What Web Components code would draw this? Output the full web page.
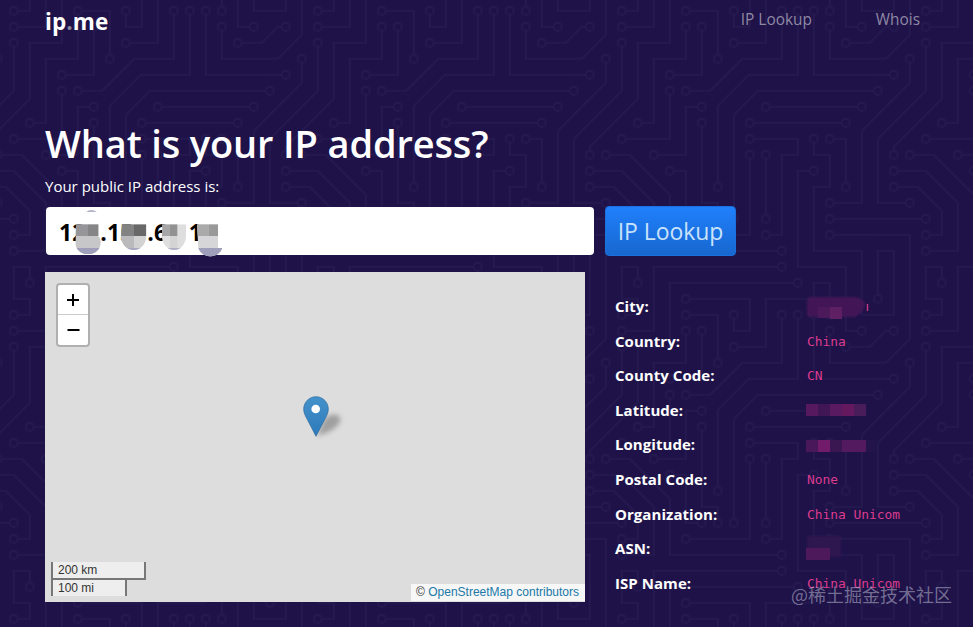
<!DOCTYPE html>
<html lang="en">
<head>
<meta charset="utf-8">
<title>ip.me</title>
<style>
    html, body {
        margin: 0;
        height: 627px;
        overflow: hidden;
        background: #1e1249;
    }
    body {
        font-family: "Open Sans", "Noto Sans", sans-serif;
        color: #fff;
    }
</style>
</head>
<body>
<ip-page>
    <site-header slot="header"></site-header>
    <page-intro slot="intro"></page-intro>
    <lookup-form slot="form"></lookup-form>
    <location-map slot="map"></location-map>
    <detail-list slot="details">
        <detail-row label="City:" mask="city"></detail-row>
        <detail-row label="Country:">China</detail-row>
        <detail-row label="County Code:">CN</detail-row>
        <detail-row label="Latitude:" mask="latitude"></detail-row>
        <detail-row label="Longitude:" mask="longitude"></detail-row>
        <detail-row label="Postal Code:">None</detail-row>
        <detail-row label="Organization:">China Unicom</detail-row>
        <detail-row label="ASN:" mask="asn"></detail-row>
        <detail-row label="ISP Name:">China Unicom</detail-row>
    </detail-list>
    <water-mark slot="mark">@稀土掘金技术社区</water-mark>
</ip-page>

<script>
function define(name, html) {
    const template = document.createElement('template');
    template.innerHTML = html;
    customElements.define(name, class extends HTMLElement {
        constructor() {
            super();
            this.attachShadow({ mode: 'open' }).appendChild(template.content.cloneNode(true));
        }
    });
}

// Circuit traces on a 304px tile. Traces in "both" end in a ring on each side,
// "start" has a ring on the first point only, "plain" has none.
const traces = {
    both: [
        'M273 129H177', 'M193 113H289', 'M193 225V161', 'M129 129V209H145V225',
        'M129 113H113V161H81', 'M113 241H177V161', 'M97 177H113V225H129',
        'M257 145H273V193', 'M193 241H209V161H225V145H177', 'M97 97V145H49',
        'M113 33V65H81V129H65', 'M97 81H129V33', 'M113 17H145V65',
        'M113 1H177V33H161V17', 'M113 97H137.4L169.4 65H209V17',
        'M145 193V112L176 81H225V17', 'M161 225V121L185 97H305',
        'M49 49V97L1 145V209H33', 'M49 241H65V217L41 193H17',
        'M209 257H97V201L57 161H33', 'M49 257H81V209L49 177H17'
    ],
    start: [
        'M49 225H0', 'M209 273H82', 'M257 225H304', 'M257 241H304', 'M17 81H0',
        'M257 17V0', 'M241 17V81H304', 'M257 33V65H304', 'M65 289V273H49V304',
        'M241 177H225V273H273V304', 'M289 33H273V0', 'M49 33H81V0',
        'M225 289H97V304', 'M241 145V161H257V193H241V257H289V304',
        'M49 17H65V1H48', 'M161 49H193V1H242', 'M17 161V153L65 105V49H97V0',
        'M33 65V89L0 122', 'M17 33H9L0 42', 'M273 49H297L304 42',
        'M257 209H289V137L304 122', 'M1 305V257H17V304'
    ],
    plain: [
        'M33 0V41L9 65H0', 'M33 304V241H0', 'M0 17H17V0', 'M289 0V17H304',
        'M257 304V289H241V304', 'M81 272V304'
    ]
};

class CircuitBackground extends HTMLElement {
    constructor() {
        super();
        const paths = Object.keys(traces).map(kind =>
            traces[kind].map(d => `<path class="${kind}" d="${d}"/>`).join('')
        ).join('');
        this.attachShadow({ mode: 'open' }).innerHTML = `
            <style>
                :host { display: block; }
                svg { display: block; width: 100%; height: 100%; }
                path { fill: none; stroke: #261b51; stroke-width: 1.6; }
                circle { fill: #1e1249; stroke: #251a50; stroke-width: 1.8; }
                .both { marker-start: url(#ring); marker-end: url(#ring); }
                .start { marker-start: url(#ring); }
            </style>
            <svg>
                <defs>
                    <marker id="ring" viewBox="-6 -6 12 12" markerWidth="12" markerHeight="12" markerUnits="userSpaceOnUse">
                        <circle r="4"/>
                    </marker>
                    <pattern id="tile" x="-35.2" y="-6.2" width="304" height="304" patternUnits="userSpaceOnUse">
                        ${paths}
                        <circle cx="1" cy="97" r="4"/><circle cx="1" cy="1" r="4"/>
                        <circle cx="305" cy="1" r="4"/><circle cx="305" cy="305" r="4"/>
                        <circle cx="113" cy="305" r="4"/>
                    </pattern>
                </defs>
                <rect width="100%" height="100%" fill="url(#tile)"/>
            </svg>`;
    }
}
customElements.define('circuit-background', CircuitBackground);

define('ip-page', `
    <style>
        :host { display: block; position: relative; height: 627px; overflow: hidden; }
        circuit-background { position: absolute; inset: 0; }
        .page { position: relative; display: flex; flex-direction: column; padding-left: 45px; }
        .columns { display: flex; gap: 30px; margin-top: 17px; }
        ::slotted([slot="mark"]) { position: absolute; left: 791px; top: 581px; }
    </style>
    <circuit-background></circuit-background>
    <div class="page">
        <slot name="header"></slot>
        <slot name="intro"></slot>
        <slot name="form"></slot>
        <div class="columns">
            <slot name="map"></slot>
            <slot name="details"></slot>
        </div>
    </div>
    <slot name="mark"></slot>
`);

define('site-header', `
    <style>
        :host { display: flex; justify-content: space-between; align-items: flex-start; height: 42px; padding-right: 53px; }
        .logo { font-size: 22.5px; font-weight: 700; letter-spacing: 0.1px; line-height: 44px; }
        .logo i { font-style: normal; color: #8c879c; }
        nav { display: flex; gap: 64px; font-size: 15.4px; line-height: 40px; color: #8f88a4; }
    </style>
    <div class="logo">ip<i>.</i>me</div>
    <nav><span>IP Lookup</span><span>Whois</span></nav>
`);

define('page-intro', `
    <style>
        :host { display: block; height: 164px; }
        h1 { margin: 0; padding-top: 77px; font-size: 38px; font-weight: 600; line-height: 48px; letter-spacing: -0.14px; white-space: nowrap; }
        p { margin: 7px 0 0; font-size: 15px; line-height: 24px; }
    </style>
    <h1>What is your IP address?</h1>
    <p>Your public IP address is:</p>
`);

define('lookup-form', `
    <style>
        :host { display: flex; align-items: center; gap: 11px; height: 49px; padding: 0 0 0 1px; }
        .field { position: relative; box-sizing: border-box; width: 548px; height: 48px; border-radius: 4px; background: #fff; }
        /* the redaction blobs hang over the lower edge of the field */
        svg { position: absolute; left: -6px; top: -12px; width: 220px; height: 75px; }
        text { font-size: 69px; font-weight: 700; fill: #000; }
        button {
            box-sizing: border-box; width: 131px; height: 50px; padding: 0;
            border: 1px solid #1a70df; border-radius: 4px;
            background: linear-gradient(#2080fc, #1767cf);
            color: #c9e2fc; font: 23px/48px "Open Sans", sans-serif; letter-spacing: -0.05px;
        }
    </style>
    <div class="field">
        <svg viewBox="0 0 660 225">
            <defs>
                <clipPath id="c1"><path d="M108 88h67v35q8 8 7 20a38 35 0 0 1-76 0z"/></clipPath>
                <clipPath id="c2"><path d="M246 88h73v35a38 42 0 0 1-76 0z"/></clipPath>
                <clipPath id="c3"><path d="M367 88h71v35a36 42 0 0 1-72 0z"/></clipPath>
                <clipPath id="c4"><path d="M471 88h63v71h13a37 33 0 0 1-72 0z"/></clipPath>
            </defs>
            <text x="57" y="138">12</text>
            <text x="181" y="138">.1</text>
            <text x="240" y="138">5</text>
            <text x="322" y="138">.6</text>
            <text x="446" y="138">1</text>
            <path fill="#9b9bbb" d="M139 50q14-8 31 0z"/>
            <g clip-path="url(#c1)">
                <path fill="#c7c7ca" d="M100 80h90v110h-90z"/>
                <path fill="#969699" d="M100 80h44v43h-44z"/><path fill="#858588" d="M144 80h40v43h-40z"/>
                <path fill="#9e9ebb" d="M100 159h90v30h-90z"/>
            </g>
            <g clip-path="url(#c2)">
                <path fill="#d2d2d3" d="M240 80h90v110h-90z"/>
                <path fill="#828283" d="M240 80h42v43h-42z"/><path fill="#686869" d="M282 80h40v43h-40z"/>
                <path fill="#bababc" d="M240 123h42v36h-42z"/>
                <path fill="#a7a7c0" d="M240 159h90v30h-90z"/>
            </g>
            <g clip-path="url(#c3)">
                <path fill="#dededf" d="M360 80h90v110h-90z"/>
                <path fill="#a6a6a8" d="M360 80h30v43h-30z"/><path fill="#929293" d="M390 80h22v43h-22z"/>
                <path fill="#d4d4d5" d="M390 123h22v36h-22z"/>
                <path fill="#aeaec5" d="M360 159h90v30h-90z"/>
            </g>
            <g clip-path="url(#c4)">
                <path fill="#d6d6d8" d="M468 80h84v115h-84z"/>
                <path fill="#aaaaab" d="M468 80h38v43h-38z"/><path fill="#999" d="M506 80h28v43h-28z"/>
                <path fill="#9f9ebb" d="M468 159h84v36h-84z"/>
            </g>
        </svg>
    </div>
    <button>IP Lookup</button>
`);

define('map-pin', `
    <style>
        :host { display: block; width: 45px; height: 45px; }
        svg { display: block; }
    </style>
    <svg width="45" height="45" viewBox="0 0 45 45">
        <defs>
            <linearGradient id="body" x2="0" y2="1"><stop stop-color="#4492cb"/><stop offset="1" stop-color="#2d79bb"/></linearGradient>
            <filter id="soft" x="-30%" y="-30%" width="160%" height="160%"><feGaussianBlur stdDeviation="2.4"/></filter>
        </defs>
        <path d="M14 40 21 23q8-7 15-3 4 5-3 11-7 6-19 9z" fill="#555" opacity=".45" filter="url(#soft)"/>
        <path d="M13 .7C6.200.7.7 6.200.7 13c0 3 1 5.500 2.300 8L13 40.300 23 21c1.300-2.500 2.300-5 2.300-8C25.300 6.200 19.800.7 13 .7z" fill="url(#body)" stroke="#2f6c9e" stroke-width=".7"/>
        <circle cx="12.700" cy="13" r="4.300" fill="#fff"/>
    </svg>
`);

define('location-map', `
    <style>
        :host { display: block; position: relative; width: 540px; height: 330px; background: #ddd; font-family: "Liberation Sans", Arial, sans-serif; }
        .zoom { position: absolute; left: 11px; top: 11px; box-sizing: border-box; width: 34px; height: 64px; border: 2px solid #b0b0b0; border-radius: 4px; background: #fff; }
        .zoom div { box-sizing: border-box; height: 30px; display: flex; align-items: center; justify-content: center; }
        .zoom div:first-child { border-bottom: 1px solid #ccc; }
        map-pin { position: absolute; left: 258px; top: 124px; }
        .scale { position: absolute; left: 6px; bottom: 6px; font-size: 12px; line-height: 16px; color: #333; }
        .scale div { box-sizing: border-box; height: 18px; padding: 0 5px; border: 2px solid #777; border-top: 0; background: rgba(255, 255, 255, .5); }
        .km { width: 95px; }
        .scale .mi { width: 76px; height: 16px; border-bottom: 0; }
        .credit { position: absolute; right: 0; bottom: 1px; height: 17px; padding: 0 6px 0 5px; font-size: 12px; line-height: 16px; color: #333; background: rgba(255, 255, 255, .75); white-space: nowrap; }
        .credit span { color: #2079a8; }
    </style>
    <div class="zoom">
        <div><svg width="14" height="14"><path d="M1 7h12M7 1v12" stroke="#000" stroke-width="2"/></svg></div>
        <div><svg width="14" height="14"><path d="M1.500 7h12" stroke="#000" stroke-width="2"/></svg></div>
    </div>
    <map-pin></map-pin>
    <div class="scale"><div class="km">200 km</div><div class="mi">100 mi</div></div>
    <div class="credit">© <span>OpenStreetMap contributors</span></div>
`);

define('detail-list', `
    <style>
        :host { display: flex; flex-direction: column; padding-top: 17px; }
    </style>
    <slot></slot>
`);

// Pixelated stand-ins for hidden values, drawn on a 12px grid
const masks = {
    city: `
        <path d="M1 11q0-4 4-4h43q7 0 11 6-1 10-10 14H4q-3 0-3-4z" fill="#421856" filter="url(#edge)"/>
        <path d="M24 17h12v12H24z" fill="#5e2063"/><path d="M12 17h12v11H12z" fill="#4c1a5a"/>
        <path d="M61.500 14v7" stroke="#c23683" stroke-width="1.500"/>`,
    latitude: `
        <path d="M0 10h12v12H0z" fill="#56195f"/><path d="M12 10h12v12H12z" fill="#401654"/>
        <path d="M24 10h12v12H24z" fill="#5a1a61"/><path d="M36 10h12v12H36z" fill="#64195f"/>
        <path d="M48 10h12v12H48z" fill="#481d59"/>`,
    longitude: `
        <path d="M0 12h12v12H0z" fill="#48185a"/><path d="M12 12h12v12H12z" fill="#731b6b"/>
        <path d="M24 12h12v12H24z" fill="#3a1750"/><path d="M36 12h24v12H36z" fill="#541a5f"/>
        <path d="M60 12h10v12H60z" fill="#24144c"/>`,
    asn: `
        <path d="M1 4h34v21H1z" fill="#2d134f" filter="url(#edge)"/>
        <path d="M0 16h24v12H0z" fill="#4e195b"/>`
};

class DetailRow extends HTMLElement {
    constructor() {
        super();
        this.attachShadow({ mode: 'open' });
    }

    connectedCallback() {
        const mask = masks[this.getAttribute('mask')];
        this.shadowRoot.innerHTML = `
            <style>
                :host { display: flex; height: 34.6px; line-height: 34.6px; white-space: nowrap; }
                .label { width: 192px; font-size: 15px; font-weight: 700; letter-spacing: 0.05px; }
                .value { font-family: "DejaVu Sans Mono", monospace; font-size: 12.9px; color: #dc3c8c; padding-top: 1px; }
                svg { display: block; margin-left: -1px; }
            </style>
            <div class="label"></div>
            <div class="value">${mask ? `
                <svg width="72" height="32">
                    <defs><filter id="edge"><feGaussianBlur stdDeviation="1"/></filter></defs>
                    ${mask}
                </svg>` : '<slot></slot>'}
            </div>`;
        this.shadowRoot.querySelector('.label').textContent = this.getAttribute('label');
    }
}
customElements.define('detail-row', DetailRow);

define('water-mark', `
    <style>
        :host { display: block; font: 18px/26px "Noto Sans CJK SC", sans-serif; color: rgba(190, 188, 210, .55); white-space: nowrap; }
    </style>
    <slot></slot>
`);
</script>
</body>
</html>
